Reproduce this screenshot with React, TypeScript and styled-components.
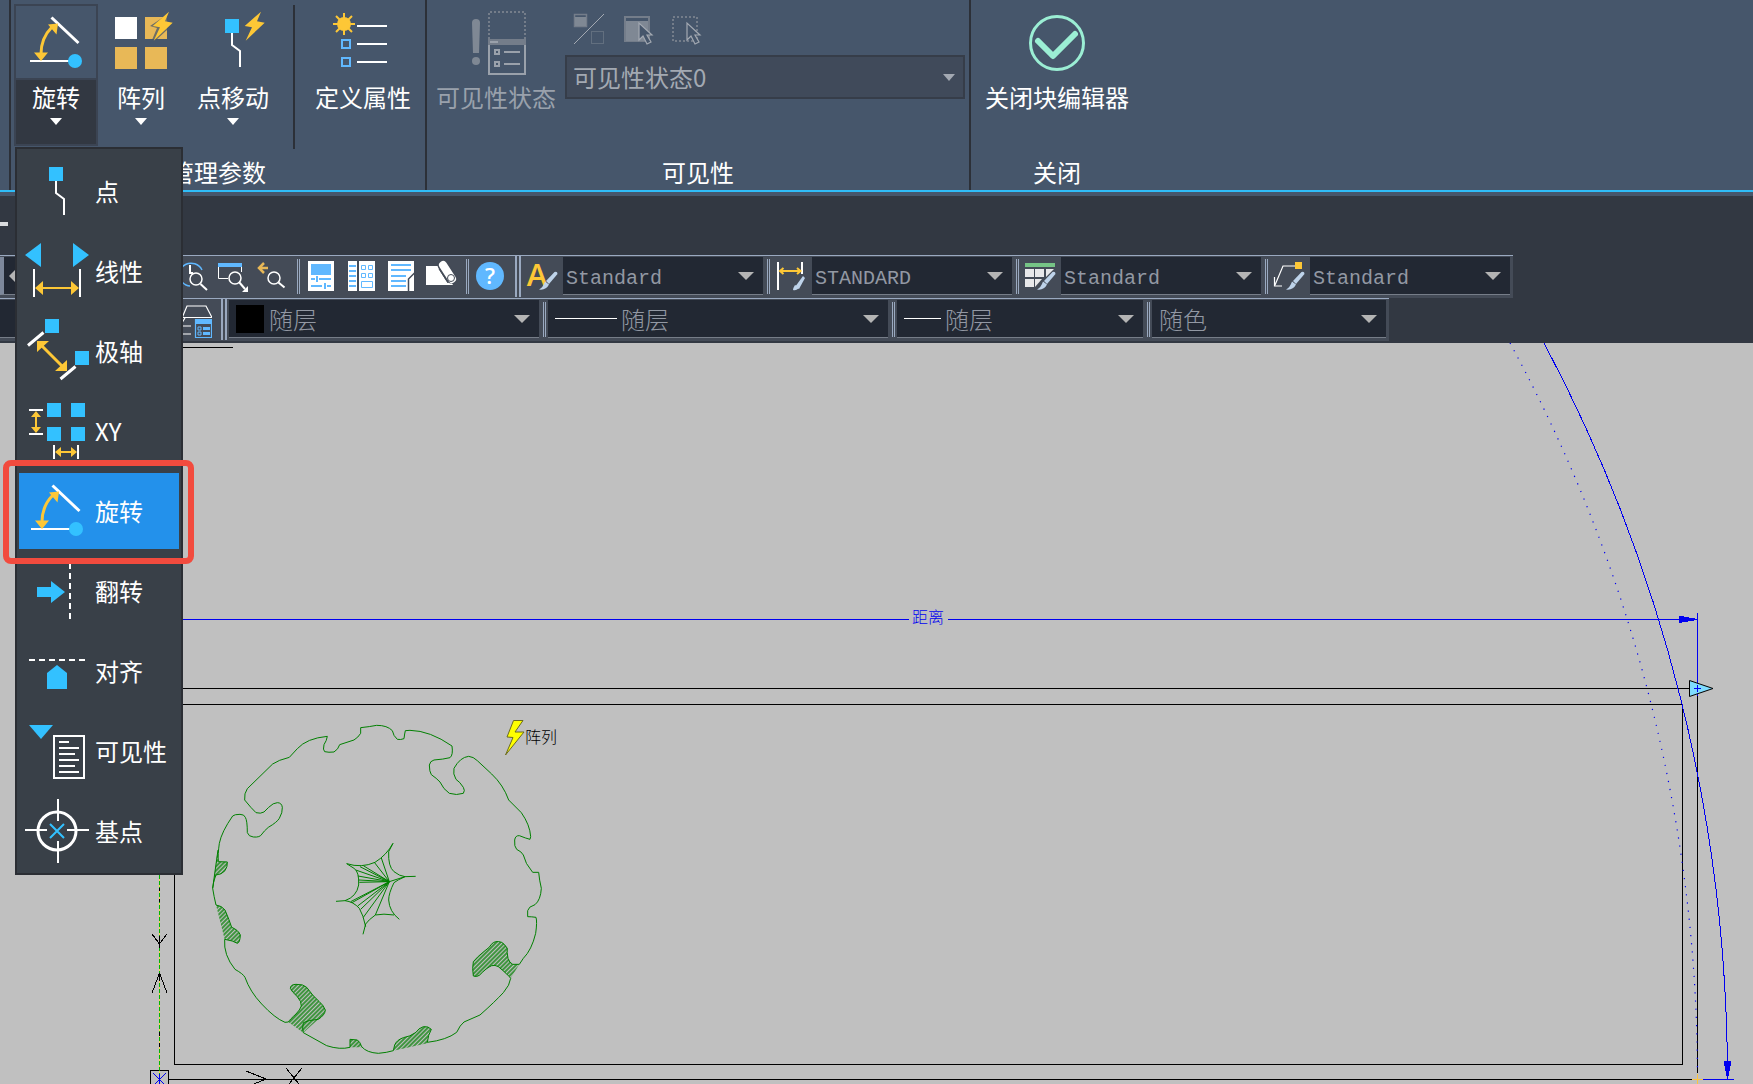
import React from "react";
import styled, { createGlobalStyle } from "styled-components";

const CYAN = "#33c1ff";
const GOLD = "#fdc736";
const SKY = "#60b8ff";
const UI = `"Noto Sans CJK SC", "Noto Sans", sans-serif`;
const MONO = `"Liberation Mono", "Noto Sans CJK SC", monospace`;

const GlobalStyle = createGlobalStyle`
  * { box-sizing: border-box; }
  body { margin: 0; background: #c0c0c0; font-family: ${UI}; overflow: hidden; }
  button, select { font: inherit; color: inherit; }
`;

const Page = styled.div`
  display: flex;
  flex-direction: column;
  height: 100vh;
  overflow: hidden;
`;

/* ---------- ribbon ---------- */

const Ribbon = styled.header`
  display: flex;
  background: #46566b;
  border-bottom: 2px solid #2fbdf8;
  padding-left: 9px;
  color: #fff;
  font-size: 24px;
  line-height: 32px;
`;

const Panel = styled.section`
  display: flex;
  flex-direction: column;
  height: 190px;
  border-left: 2px solid #2c3038;
`;

const PanelBody = styled.div`
  display: flex;
  flex: 1;
`;

const PanelTitle = styled.h2`
  margin: 0;
  padding-bottom: 2px;
  font-size: 24px;
  line-height: 32px;
  font-weight: 400;
  text-align: center;
`;

const ToolButton = styled.button<{ $width: number; $dim?: boolean }>`
  display: flex;
  flex-direction: column;
  align-items: center;
  width: ${(p) => p.$width}px;
  padding: 11px 0 0;
  border: 0;
  background: none;
  color: ${(p) => (p.$dim ? "#99a1ac" : "#fff")};
  white-space: nowrap;
`;

const ToolLabel = styled.span`
  display: block;
  margin-top: 6px;
  height: 32px;
`;

const Caret = styled.span<{ $size?: number; $color?: string }>`
  width: 0;
  height: 0;
  border-left: ${(p) => p.$size ?? 6}px solid transparent;
  border-right: ${(p) => p.$size ?? 6}px solid transparent;
  border-top: ${(p) => p.$size ?? 7}px solid ${(p) => p.$color ?? "#fff"};
  pointer-events: none;
`;

const ToolCaret = styled(Caret)`
  margin-top: 5px;
`;

const SplitTool = styled.div`
  position: relative;
  width: 84px;
  height: 142px;
  margin: 4px 0 0 3px;
  border: 2px solid #3b4453;
`;

const SplitFace = styled.button`
  display: flex;
  justify-content: center;
  width: 100%;
  height: 74px;
  padding: 5px 0 0;
  border: 0;
  border-bottom: 2px solid #3b4453;
  background: #46566b;
`;

const SplitMore = styled.button`
  display: flex;
  flex-direction: column;
  align-items: center;
  width: 100%;
  height: 64px;
  padding: 1px 0 0;
  border: 0;
  background: #323842;
`;

const SplitLabel = styled.span`
  height: 32px;
`;

const ToolDivider = styled.div`
  width: 2px;
  height: 144px;
  margin: 5px 6px 0 11px;
  background: #2c3038;
`;

const Menu = styled.ul`
  position: absolute;
  z-index: 5;
  top: 141px;
  left: -1px;
  display: flex;
  flex-direction: column;
  gap: 4px;
  width: 168px;
  margin: 0;
  padding: 4px 2px;
  border: 2px solid #2b2e34;
  background: #394048;
  list-style: none;
`;

const MenuRow = styled.li`
  position: relative;
`;

const MenuButton = styled.button<{ $active?: boolean }>`
  display: flex;
  align-items: center;
  gap: 6px;
  width: 100%;
  height: 76px;
  padding: 0 0 0 6px;
  border: 0;
  background: ${(p) => (p.$active ? "#2391eb" : "transparent")};
  color: #fff;
  text-align: left;
  white-space: nowrap;
`;

const Callout = styled.span`
  position: absolute;
  z-index: 2;
  inset: -13px -15px -15px -16px;
  border: 6px solid #f24b3e;
  border-radius: 8px;
  pointer-events: none;
`;

const StateColumn = styled.div`
  display: flex;
  flex-direction: column;
  gap: 10px;
  width: 400px;
  margin-right: 4px;
  padding-top: 13px;
`;

const MiniTools = styled.div`
  display: flex;
  gap: 16px;
  padding-left: 8px;
`;

const MiniButton = styled.button`
  display: block;
  width: 32px;
  height: 32px;
  padding: 0;
  border: 0;
  background: none;
`;

const StateBox = styled.div`
  display: flex;
  align-items: center;
  height: 44px;
  padding-right: 8px;
  border: 2px solid #363d49;
  background: #404a5a;
  color: #a3a9b2;
`;

const PlainSelect = styled.select`
  flex: 1;
  min-width: 0;
  height: 100%;
  padding: 0 0 0 6px;
  border: 0;
  background: transparent;
  color: inherit;
  opacity: 1;
  appearance: none;
`;

/* ---------- toolbars ---------- */

const DocStrip = styled.div`
  display: flex;
  align-items: center;
  height: 63px;
  border-top: 4px solid #46566b;
  background: #323842;
`;

const TabDash = styled.span`
  width: 8px;
  height: 4px;
  margin-top: -4px;
  background: #d9dbde;
`;

const ToolbarArea = styled.div`
  padding-bottom: 2px;
  background: #323842;
  color: #9298a3;
`;

const Toolbar = styled.div`
  display: flex;
  width: max-content;
  height: 43px;
  padding-right: 3px;
  border-top: 1px solid #9aa9c0;
  background: #444b57;
`;

const Lead = styled.div<{ $width: number; $edge?: boolean }>`
  width: ${(p) => p.$width}px;
  height: 38px;
  margin-top: 1px;
  border-left: ${(p) => (p.$edge ? "4px solid #7d889b" : "0")};
  border-bottom: 1px solid #767d88;
  background: #222833;
  display: flex;
  align-items: center;
  padding-left: 5px;
`;

const BackCaret = styled.span`
  border: 6px solid transparent;
  border-left: 0;
  border-right-color: #b4b4b4;
`;

const IconSlot = styled.button<{ $width?: number }>`
  display: flex;
  justify-content: center;
  width: ${(p) => p.$width ?? 40}px;
  padding: 5px 0 0;
  border: 0;
  background: none;
`;

const Rule = styled.span<{ $before: number; $after: number }>`
  width: 3px;
  height: 35px;
  margin: 3px ${(p) => p.$after}px 0 ${(p) => p.$before}px;
  border: solid #9aa9c0;
  border-width: 0 1px;
`;

const Grip = styled.span<{ $before: number; $after: number }>`
  width: 6px;
  height: 41px;
  margin: 0 ${(p) => p.$after}px 0 ${(p) => p.$before}px;
  border: solid #9aa9c0;
  border-width: 0 2px;
`;

const Combo = styled.label<{ $width: number; $pad?: number }>`
  display: flex;
  align-items: center;
  width: ${(p) => p.$width}px;
  height: 38px;
  margin-top: 1px;
  padding: 0 9px 0 ${(p) => p.$pad ?? 3}px;
  border-bottom: 1px solid #767d88;
  background: #222833;
`;

const ComboSelect = styled(PlainSelect)<{ $cjk?: boolean }>`
  padding: ${(p) => (p.$cjk ? 0 : 5)}px 0 0;
  font-family: ${(p) => (p.$cjk ? UI : MONO)};
  font-size: ${(p) => (p.$cjk ? 24 : 20)}px;
  font-weight: ${(p) => (p.$cjk ? 300 : 400)};
`;

const Swatch = styled.span`
  width: 28px;
  height: 28px;
  margin-right: 5px;
  background: #000;
`;

const LineSample = styled.span<{ $width: number }>`
  width: ${(p) => p.$width}px;
  height: 1px;
  margin-right: 4px;
  background: #fff;
`;

/* ---------- drawing ---------- */

const Canvas = styled.main`
  flex: 1;
  min-height: 0;
  background: #c0c0c0;
`;

const Drawing = styled.svg`
  display: block;
  width: 100%;
  height: 100%;
`;

const DrawingText = styled.text`
  font-family: ${UI};
  font-size: 16px;
  font-weight: 300;
`;

/* ---------- icons ---------- */

const Icon64 = ({ children }: { children: React.ReactNode }) => (
  <svg width="64" height="64" viewBox="0 0 64 64" fill="none" stroke="#fff" strokeWidth="2" overflow="visible">
    {children}
  </svg>
);

const Icon32 = ({ children }: { children: React.ReactNode }) => (
  <svg width="32" height="32" viewBox="0 0 32 32" fill="none" stroke="#fff" strokeWidth="1.5" overflow="visible">
    {children}
  </svg>
);

const Bolt = () => <path d="M60 .7 43.7 15 51 16.3 44.7 29.7 63.7 11.7 56 10.3Z" fill={GOLD} stroke="none" />;

const PointShape = () => (
  <>
    <path d="M24 8h14v14H24z" fill={CYAN} stroke="none" />
    <path d="M31 22v12l8 6v16" />
  </>
);

const PointIcon = () => <Icon64><PointShape /></Icon64>;
const PointMoveIcon = () => <Icon64><PointShape /><Bolt /></Icon64>;

const LinearIcon = () => (
  <Icon64>
    <path d="M0 16 16 4v24zM64 16 48 4v24z" fill={CYAN} stroke="none" />
    <path d="M9 30v28M55 30v28" />
    <path d="M14 49h36" stroke={GOLD} />
    <path d="m10 49 8-7v14zM54 49l-8-7v14z" fill={GOLD} stroke="none" />
  </Icon64>
);

const PolarIcon = () => (
  <Icon64>
    <path d="M20 0h14v14H20zM50 32h14v14H50z" fill={CYAN} stroke="none" />
    <path d="m3 26.5 15.500-13M35.500 60l15-12.500" strokeWidth="3" />
    <path d="m16 26 22 22" stroke={GOLD} strokeWidth="3" />
    <path d="M12 22h12L12 33zM42 52V41L30 52z" fill={GOLD} stroke="none" />
  </Icon64>
);

const XYIcon = () => (
  <Icon64>
    <path d="M22 4h14v14H22zM46 4h14v14H46zM22 28h14v14H22zM46 28h14v14H46z" fill={CYAN} stroke="none" />
    <path d="M4 11h14M4 35h14M29 46v14M53 46v14" />
    <path d="M11 15v16M34 53h14" stroke={GOLD} />
    <path d="m11 12 5 6H6zM11 34l5-6H6zM30 53l6-5v10zM52 53l-6-5v10z" fill={GOLD} stroke="none" />
  </Icon64>
);

const RotateIcon = () => (
  <Icon64>
    <path d="M6 50h40" />
    <path d="m27.500 6.500 27 25.500" strokeWidth="3" />
    <path d="M17 43c0-11 4-20 11-27" stroke={GOLD} strokeWidth="3" />
    <path d="M10 41.500h14L17 50zM24 13.500l10-1-1.500 11z" fill={GOLD} stroke="none" />
    <circle cx="51" cy="50" r="7" fill={CYAN} stroke="none" />
  </Icon64>
);

const FlipIcon = () => (
  <Icon64>
    <path d="M12 28h14v-6l14 11-14 11v-6H12z" fill={CYAN} stroke="none" />
    <path d="M45 4v56" strokeDasharray="6 4" />
  </Icon64>
);

const AlignIcon = () => (
  <Icon64>
    <path d="M4 21h56" strokeDasharray="6 4" />
    <path d="M22 50V34l10-8 10 8v16z" fill={CYAN} stroke="none" />
  </Icon64>
);

const VisibilityIcon = () => (
  <Icon64>
    <path d="M4 6h24L16 20z" fill={CYAN} stroke="none" />
    <path d="M29 17h30v42H29zM34 23h10M34 29h20M34 35h16M34 41h20M34 47h16M34 53h20" />
  </Icon64>
);

const BaseIcon = () => (
  <Icon64>
    <circle cx="32" cy="32" r="19" strokeWidth="3" />
    <path d="M33 0v22M33 42v22M0 31h22M42 31h22" />
    <path d="m25 25 14 14M39 25 25 39" stroke={CYAN} />
  </Icon64>
);

const ArrayIcon = () => (
  <Icon64>
    <path d="M6 6h22v22H6z" fill="#fff" stroke="none" />
    <path d="M36 6h22v22H36zM6 36h22v22H6zM36 36h22v22H36z" fill="#e8b857" stroke="none" />
    <path d="M56 5 41 15l7 2-5 12h4l11-10V6z" fill="#46566b" fillOpacity=".75" stroke="none" />
    <Bolt />
  </Icon64>
);

const AttributeIcon = () => (
  <Icon64>
    <path d="M26 15h30M26 33h30M26 51h30" />
    <path d="M11 29h8v8h-8zM11 47h8v8h-8z" stroke={SKY} />
    <path d="M13 2v22M2 13h22M5 5l16 16M21 5 5 21" stroke={GOLD} />
    <circle cx="13" cy="13" r="7" fill={GOLD} stroke="none" />
  </Icon64>
);

const StateIcon = () => (
  <Icon64>
    <path d="M8 12q0-4 4-4t4 4l-1 30H9z" fill="#7f8894" stroke="none" />
    <circle cx="12" cy="50" r="4" fill="#7f8894" stroke="none" />
    <path d="M25 28V1h36v27" stroke="#747d8a" strokeDasharray="2 2" />
    <path d="M24 28h38v6H24z" fill="#747d8a" stroke="none" />
    <path d="M26 31h8" stroke="#9aa1ab" />
    <path d="M25 34v29h36V34M31 39h4v4h-4zM31 51h4v4h-4zM40 41h16M40 53h16" stroke="#9aa1ab" />
  </Icon64>
);

const CloseIcon = () => (
  <Icon64>
    <circle cx="32" cy="32" r="26.500" stroke="#9beed4" strokeWidth="3" />
    <path d="m13 30 15 15 22-22" stroke="#9beed4" strokeWidth="6" strokeLinejoin="round" strokeLinecap="round" />
  </Icon64>
);

const Pointer = () => <path d="M18 10v17l4-4 4 8 4-2-4-7h5z" fill="#46566b" stroke="#a3a9b2" strokeWidth="1.200" />;

const ToggleStateIcon = () => (
  <Icon32>
    <path d="M1.500 1.500h12v12h-12z" stroke="#747d8a" />
    <path d="M2 4h11v9H2z" fill="#7f8894" stroke="none" />
    <path d="M1 31 31 1" stroke="#a3a9b2" strokeWidth="1" />
    <path d="M18.500 18.500h12v12h-12z" stroke="#7f8894" strokeWidth="1" strokeDasharray="1 1" />
  </Icon32>
);

const ShowIcon = () => (
  <Icon32>
    <path d="M4 4h24v24H4z" stroke="#747d8a" strokeWidth="2" />
    <path d="M5 8h22v20H5z" fill="#7f8894" stroke="none" />
    <Pointer />
  </Icon32>
);

const HideIcon = () => (
  <Icon32>
    <path d="M4 4h24v24H4z" stroke="#747d8a" strokeWidth="2" strokeDasharray="2 2" />
    <Pointer />
  </Icon32>
);

const ZoomClockIcon = () => (
  <Icon32>
    <path d="M4 20A12 12 0 1 1 26 9M6 21q4 4 8 4" stroke={SKY} />
    <path d="M14 4v8h3" strokeWidth="2" />
    <circle cx="20" cy="18" r="6" />
    <path d="m24.500 23 6.500 6" strokeWidth="2" />
  </Icon32>
);

const ZoomWindowIcon = () => (
  <Icon32>
    <path d="M2 2h24v4H2z" fill={SKY} stroke="none" />
    <path d="M2.500 6v11.500H12M25.500 6v5" strokeWidth="1" />
    <circle cx="19" cy="17" r="6" />
    <path d="m23 21 6 7" strokeWidth="2" />
    <path d="M32 25v6h-6z" fill="#fff" stroke="none" />
  </Icon32>
);

const ZoomBackIcon = () => (
  <Icon32>
    <path d="M12 7H4m4-5L3 7l5 5" stroke="#e8b857" strokeWidth="2.500" />
    <circle cx="18" cy="17" r="6" />
    <path d="m22.500 21.500 6 5" strokeWidth="2" />
  </Icon32>
);

const PropertiesIcon = () => (
  <Icon32>
    <path d="M3 0h26v30H3z" fill="#fff" stroke="none" />
    <path d="M6 3h20v11H6z" fill={SKY} stroke="none" />
    <path d="M6 18h4M14 18h12M6 25h11M22 25h4M12 15v6M20 22v6" stroke={SKY} strokeWidth="2" />
  </Icon32>
);

const DesignCenterIcon = () => (
  <Icon32>
    <path d="M3 0h9v30H3zM14 0h16v30H14z" fill="#fff" stroke="none" />
    <path d="M4 5h7M4 10h7M4 15h7M4 20h7M4 25h7" stroke={SKY} strokeWidth="2" />
    <path d="M16.500 4.500h4v4h-4zM23.500 4.500h4v4h-4zM16.500 12.500h4v4h-4zM23.500 12.500h4v4h-4zM16.500 20.500h11v6h-11z" stroke={SKY} strokeWidth="1" />
  </Icon32>
);

const PalettesIcon = () => (
  <Icon32>
    <path d="M3 0h26v30H3z" fill="#fff" stroke="none" />
    <path d="M6 4h20M6 9h20M6 15h15M6 20h15M6 25h15" stroke={SKY} strokeWidth="2" />
    <path d="M23.500 30V18l6-6" stroke="#444b57" />
  </Icon32>
);

const SheetIcon = () => (
  <Icon32>
    <path d="M1 5h16l11 19H1z" fill="#fff" stroke="none" />
    <path d="m18 4 8 13" stroke="#444b57" strokeWidth="11" strokeLinecap="round" />
    <path d="m18 4 9 14" strokeWidth="8" strokeLinecap="round" />
    <circle cx="26" cy="17" r="3.500" stroke="#444b57" strokeWidth="1" />
    <path d="m14 8 9 14" stroke="#444b57" strokeWidth="1" />
  </Icon32>
);

const HelpIcon = () => (
  <Icon32>
    <circle cx="16" cy="15" r="14" fill={SKY} stroke="none" />
    <text x="16" y="23" textAnchor="middle" fontFamily="Open Sans, sans-serif" fontWeight="600" fontSize="22" fill="#fff" stroke="none">?</text>
  </Icon32>
);

const Brush = ({ small }: { small?: boolean }) =>
  small ? (
    <g stroke="none" fill="#bed3ea">
      <path d="m28 15 2 2-6 11-4-2z" />
      <path d="M20 24q-2 3-2 5 4 1 6-3z" />
    </g>
  ) : (
    <g stroke="none" fill="#bed3ea">
      <path d="M28.500 11q3-1 3 2L23 23l-3-3z" />
      <path d="m19 20.500 4 3q-3 6-10 5 4-2 6-8z" />
    </g>
  );

const TextStyleIcon = () => (
  <Icon32>
    <text x="11" y="25" textAnchor="middle" fontFamily="Open Sans, sans-serif" fontWeight="600" fontSize="31" fill={GOLD} stroke="none">A</text>
    <Brush />
  </Icon32>
);

const DimStyleIcon = () => (
  <Icon32>
    <path d="M3 1v28M27 1v12" strokeWidth="2" />
    <path d="M6 10h18M8.500 7 5 10l3.500 3M22 7l3.500 3-3.500 3" stroke={GOLD} strokeWidth="2" />
    <Brush small />
  </Icon32>
);

const TableStyleIcon = () => (
  <Icon32>
    <path d="M1 2h30v4H1z" fill="#76c486" stroke="none" />
    <path d="M1 8h9v8H1zM11 8h9v8h-9zM22 8h8l-8 8zM1 18h9v8H1zM11 18h7l-7 8z" fill="#e8e8ea" stroke="none" />
    <Brush />
  </Icon32>
);

const LeaderStyleIcon = () => (
  <Icon32>
    <path d="M2 24 10 5h12M1.500 16v9H9" strokeWidth="1.200" />
    <path d="M22 1h7v7h-7z" fill={GOLD} stroke="none" />
    <Brush />
  </Icon32>
);

const LayerStateIcon = () => (
  <svg width="32" height="36" viewBox="0 0 32 36" fill="none" stroke="#fff" strokeWidth="1.200">
    <path d="m2 14 5-12h19l6 11.500H2M0 22h11M0 30h11M5 14l-5 8" />
    <path d="M15.500 15.500h16v18h-16z" stroke={SKY} />
    <path d="M15 15h17v5H15zM23 23h7v3h-7zM23 28h7v3h-7z" fill={SKY} stroke="none" />
    <path d="M18 23h3v3h-3zM18 28h3v3h-3z" stroke={SKY} strokeWidth="1" />
  </svg>
);

/* ---------- data ---------- */

const menuItems = [
  { label: "点", Icon: PointIcon },
  { label: "线性", Icon: LinearIcon },
  { label: "极轴", Icon: PolarIcon },
  { label: "XY", Icon: XYIcon },
  { label: "旋转", Icon: RotateIcon, active: true },
  { label: "翻转", Icon: FlipIcon },
  { label: "对齐", Icon: AlignIcon },
  { label: "可见性", Icon: VisibilityIcon },
  { label: "基点", Icon: BaseIcon },
];

const styleCombos = [
  { name: "文字样式", value: "Standard", Icon: TextStyleIcon },
  { name: "标注样式", value: "STANDARD", Icon: DimStyleIcon },
  { name: "表格样式", value: "Standard", Icon: TableStyleIcon },
  { name: "引线样式", value: "Standard", Icon: LeaderStyleIcon },
];

const viewTools = [
  { name: "实时缩放", Icon: ZoomClockIcon },
  { name: "窗口缩放", Icon: ZoomWindowIcon },
  { name: "缩放上一个", Icon: ZoomBackIcon },
];

const paletteTools = [
  { name: "特性", Icon: PropertiesIcon },
  { name: "设计中心", Icon: DesignCenterIcon },
  { name: "工具选项板", Icon: PalettesIcon },
  { name: "图纸集", Icon: SheetIcon },
];

const hatchAreas = [
  "M83 450 85 485H112Q113 500 105 512 95 524 78 525L68 565Z",
  "M78 615Q95 617 105 630 118 660 125 682 145 690 151 705 150 728 142 730 130 722 104 718Z",
  "M301 865Q302 853 318 853 340 852 350 862 370 890 388 905 400 915 406 930 405 945 385 958L340 998 295 966Q300 958 318 942 330 930 334 918 335 905 322 890 305 875 301 865Z",
  "M480 1018 502 1020Q510 1025 517 1042H480Z",
  "M610 1052 614 1035Q620 1020 640 1013 660 1010 678 997 685 985 700 980 715 978 724 988 714 1005 712 1030Z",
  "M988 793H968Q958 788 954 775 950 755 952 745 942 730 935 727 915 720 904 733 900 742 885 752 862 770 850 785 846 805 850 828 860 832 868 826 890 803 905 797 915 794 925 800 955 825 962 835Z",
];

const treeOutline =
  "M85 485Q83 465 88 430 95 395 128 348 133 343 150 343 163 343 166 352 172 362 172 398 176 410 190 411 210 413 216 402 222 393 235 382 262 366 268 355 278 338 277 322 275 308 262 308 250 308 236 322L222 336Q212 342 198 338 184 325 164 300 162 280 172 266L248 192Q265 180 298 172L322 146Q350 115 412 109 410 122 402 134 398 150 404 155 416 158 432 156 445 148 449 134L492 120Q505 112 512 100V83Q540 80 560 76 592 76 607 92 610 108 622 118 632 120 642 116 644 100 646 92L660 91Q720 92 786 138 790 165 780 173 760 178 732 180 720 183 718 195 718 215 724 224 740 235 750 246 760 268 778 280 800 287 820 280 826 272 820 262 810 246 798 238 788 222 792 205 810 172 836 169 850 170 862 182L905 222Q940 255 956 300L994 338Q1020 375 1022 410L1020 418Q1008 415 988 407 976 406 974 420 972 440 980 448 995 455 1000 465 1005 490 1028 517H1046Q1048 540 1054 565 1052 600 1035 614 1015 620 1013 632V650Q1025 650 1038 652 1042 665 1037 700 1025 750 1000 775L988 793H968Q958 788 954 775 950 755 952 745 942 730 935 727 915 720 904 733 900 742 885 752 862 770 850 785 846 805 850 828 860 832 868 826 890 803 905 797 915 794 925 800 955 825 962 835 960 855 940 878 915 905 870 945L822 966Q810 975 800 997 770 1020 712 1027 714 1005 724 988 715 978 700 980 685 985 678 997 660 1010 640 1013 620 1020 614 1035L610 1052Q590 1058 565 1060 530 1058 515 1040 510 1025 502 1020L480 1018V1042Q450 1050 410 1037L340 998Q336 985 340 968 355 960 385 958 405 945 406 930 400 915 388 905 370 890 350 862 340 852 318 853 302 853 301 865 305 875 322 890 335 905 334 918 330 930 318 942 300 958 295 966L285 967Q255 955 215 912 180 875 165 832 160 822 135 808 100 765 104 718 130 722 142 730 150 728 151 705 145 690 125 682 118 660 105 630 95 617 78 615 72 590 68 565 70 540 78 525 95 524 105 512 113 500 112 486L85 485M84 450 68 565";

const treeHeart =
  "M609 430 596 455Q594 500 612 515 628 528 645 530L677 529M645 530Q622 540 612 548 596 580 596 600 598 635 628 658M612 645Q580 640 556 645 535 660 527 672L519 703M527 680Q520 645 508 625 490 605 465 602L438 604M465 602Q500 590 506 555 508 515 492 505L470 491Q515 505 555 487 590 465 609 430";

const treeRays = [
  [574, 474], [553, 487], [520, 497], [510, 500], [497, 510], [504, 528], [506, 540], [508, 547],
  [482, 605], [486, 608], [503, 618], [512, 628], [520, 652], [556, 645], [645, 530],
];

function BlockDrawing() {
  return (
    <Drawing viewBox="0 343 1753 741" preserveAspectRatio="xMinYMin slice" fill="none" strokeWidth="1">
      <defs>
        <pattern id="hatch" width="9" height="9" patternUnits="userSpaceOnUse" patternTransform="rotate(45)">
          <path d="M3 0V9" stroke="#008000" strokeWidth="4" />
        </pattern>
      </defs>

      <g shapeRendering="crispEdges">
        <g stroke="#000">
          <path d="M15 347.500H233M159 688.500H1689M174.500 704.500H1682.500V1064.500H174.500ZM169 1079.500H1697M1697.500 696V1073" />
          <path d="M152 934l7.500 10 7.500-10M152 993l7.500-20 7.500 20M246 1071l20 8-12 5M286 1068l13 16M302 1068l-13 16" />
          <path d="M150.500 1070.500h18v18h-18z" />
        </g>

        <path d="M159.500 875V1079" stroke="#fcd04f" />
        <path d="M159.500 875V1079" stroke="#00b400" strokeDasharray="4 2" />
        <path d="M159.500 888v3M159.500 899v3M159.500 936v12M159.500 973v8M159.500 1032v4M159.500 1043v4" stroke="#000" />

        <g stroke="#0000f0">
          <path d="M153 1073l13 13M166 1073l-13 13M159.500 1074v10M15 619.500H909M948 619.500H1697M1697.500 613V696M1703 1079.500H1734" />
          <path d="M1544 343A1568.500 1568.500 0 0 1 1727.500 1079" />
          <path d="M1679 616l18 3.500-18 3zM1724 1061h7l-3.500 17z" fill="#0000f0" />
        </g>
        <path d="M1692 1079.500h11M1697.500 1074v10" stroke="#fcc43e" />
      </g>

      <path
        d="M1510 343A1538.500 1538.500 0 0 1 1697.500 1073"
        stroke="#0000f0"
        strokeWidth="1.200"
        strokeDasharray="1.200 7"
      />
      <path d="M1689.500 680.500 1713 688.500l-23.500 8z" fill="#7fdcff" stroke="#000" />
      <path d="M1694 688.500h7M1697.500 685v7" stroke="#0000f0" />

      <g transform="translate(190 700) scale(.33333)" stroke="#008000" strokeWidth="3">
        {hatchAreas.map((d) => (
          <path key={d} d={d} fill="url(#hatch)" stroke="none" />
        ))}
        <path d={treeOutline} />
        <path d={treeHeart} />
        {treeRays.map(([x, y]) => (
          <path key={`${x}-${y}`} d={`M598 545 ${x} ${y}`} />
        ))}
      </g>

      <path d="M513.500 720.500h9.500l-8 11.500h9l-18.500 23 7.500-17.500-6-.500z" fill="#ff0" stroke="#6b6b20" />
      <DrawingText x="525" y="743" fill="#000">阵列</DrawingText>
      <DrawingText x="912" y="623" fill="#0000f0">距离</DrawingText>
    </Drawing>
  );
}

/* ---------- app ---------- */

export default function App() {
  return (
    <Page>
      <GlobalStyle />
      <Ribbon>
        <Panel>
          <PanelBody>
            <SplitTool>
              <SplitFace aria-label="旋转参数"><RotateIcon /></SplitFace>
              <SplitMore aria-expanded="true">
                <SplitLabel>旋转</SplitLabel>
                <ToolCaret />
              </SplitMore>
              <Menu>
                {menuItems.map(({ label, Icon, active }) => (
                  <MenuRow key={label}>
                    <MenuButton $active={active}>
                      <Icon />
                      <span>{label}</span>
                    </MenuButton>
                    {active && <Callout />}
                  </MenuRow>
                ))}
              </Menu>
            </SplitTool>
            <ToolButton $width={86}><ArrayIcon /><ToolLabel>阵列</ToolLabel><ToolCaret /></ToolButton>
            <ToolButton $width={98}><PointMoveIcon /><ToolLabel>点移动</ToolLabel><ToolCaret /></ToolButton>
            <ToolDivider />
            <ToolButton $width={124}><AttributeIcon /><ToolLabel>定义属性</ToolLabel></ToolButton>
          </PanelBody>
          <PanelTitle>管理参数</PanelTitle>
        </Panel>

        <Panel>
          <PanelBody>
            <ToolButton $width={138} $dim disabled>
              <StateIcon /><ToolLabel>可见性状态</ToolLabel>
            </ToolButton>
            <StateColumn>
              <MiniTools>
                <MiniButton aria-label="切换可见性模式"><ToggleStateIcon /></MiniButton>
                <MiniButton aria-label="使可见"><ShowIcon /></MiniButton>
                <MiniButton aria-label="使不可见"><HideIcon /></MiniButton>
              </MiniTools>
              <StateBox>
                <PlainSelect aria-label="可见性状态" disabled>
                  <option>可见性状态0</option>
                </PlainSelect>
                <Caret $color="#a3a9b2" />
              </StateBox>
            </StateColumn>
          </PanelBody>
          <PanelTitle>可见性</PanelTitle>
        </Panel>

        <Panel>
          <PanelBody>
            <ToolButton $width={172}><CloseIcon /><ToolLabel>关闭块编辑器</ToolLabel></ToolButton>
          </PanelBody>
          <PanelTitle>关闭</PanelTitle>
        </Panel>
      </Ribbon>

      <DocStrip><TabDash /></DocStrip>

      <ToolbarArea>
        <Toolbar>
          <Lead $width={172} $edge><BackCaret /></Lead>
          {viewTools.map(({ name, Icon }) => (
            <IconSlot key={name} aria-label={name}><Icon /></IconSlot>
          ))}
          <Rule $before={5} $after={1} />
          {paletteTools.map(({ name, Icon }) => (
            <IconSlot key={name} aria-label={name}><Icon /></IconSlot>
          ))}
          <Rule $before={5} $after={1} />
          <IconSlot aria-label="帮助"><HelpIcon /></IconSlot>
          <Grip $before={5} $after={0} />
          {styleCombos.map(({ name, value, Icon }, i) => (
            <React.Fragment key={name}>
              {i > 0 && <Rule $before={4} $after={0} />}
              <IconSlot $width={42} aria-label={name}><Icon /></IconSlot>
              <Combo $width={200}>
                <ComboSelect aria-label={name}><option>{value}</option></ComboSelect>
                <Caret $size={8} $color="#b4b4b4" />
              </Combo>
            </React.Fragment>
          ))}
        </Toolbar>

        <Toolbar>
          <Lead $width={176} />
          <IconSlot aria-label="图层状态管理器"><LayerStateIcon /></IconSlot>
          <Grip $before={5} $after={2} />
          <Combo $width={310} $pad={7}>
            <Swatch />
            <ComboSelect $cjk aria-label="颜色"><option>随层</option></ComboSelect>
            <Caret $size={8} $color="#b4b4b4" />
          </Combo>
          <Rule $before={4} $after={2} />
          <Combo $width={340} $pad={7}>
            <LineSample $width={62} />
            <ComboSelect $cjk aria-label="线型"><option>随层</option></ComboSelect>
            <Caret $size={8} $color="#b4b4b4" />
          </Combo>
          <Rule $before={4} $after={2} />
          <Combo $width={246} $pad={7}>
            <LineSample $width={37} />
            <ComboSelect $cjk aria-label="线宽"><option>随层</option></ComboSelect>
            <Caret $size={8} $color="#b4b4b4" />
          </Combo>
          <Rule $before={4} $after={2} />
          <Combo $width={234} $pad={7}>
            <ComboSelect $cjk aria-label="打印样式"><option>随色</option></ComboSelect>
            <Caret $size={8} $color="#b4b4b4" />
          </Combo>
        </Toolbar>
      </ToolbarArea>

      <Canvas><BlockDrawing /></Canvas>
    </Page>
  );
}
